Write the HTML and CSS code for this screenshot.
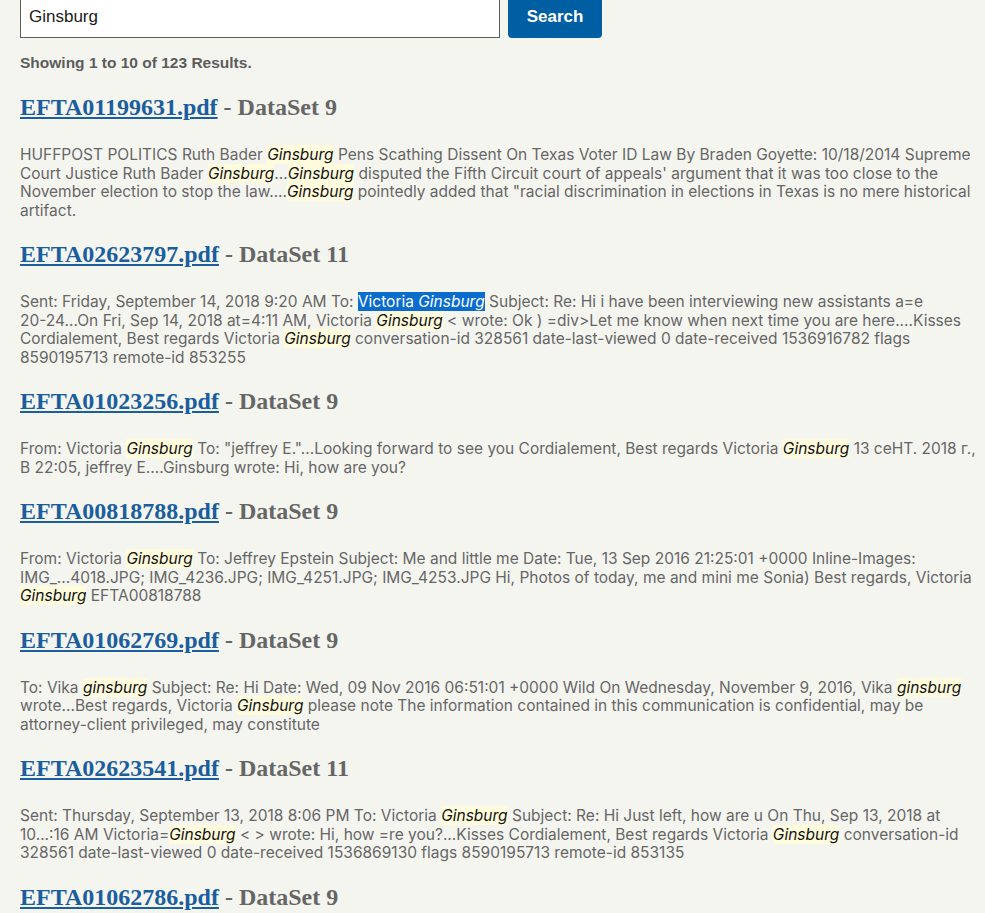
FILE: index.html
```html
<!DOCTYPE html>
<html lang="en">
<head>
  <meta charset="UTF-8" />
  <meta name="viewport" content="width=device-width, initial-scale=1.0" />
  <title>Search results - Ginsburg</title>
  <link rel="stylesheet" href="styles.css">
</head>
<body>
  <div class="page">

    <form class="search-form">
      <input class="search-input" type="text" value="Ginsburg" />
      <button class="search-button" type="button">Search</button>
    </form>

    <div class="result-count">Showing 1 to 10 of 123 Results.</div>

    <div class="result">
      <h2 class="result-title"><a href="#">EFTA01199631.pdf</a> - DataSet 9</h2>
      <p class="result-snippet">HUFFPOST POLITICS Ruth Bader <em class="hit">Ginsburg</em> Pens Scathing Dissent On Texas Voter ID Law By Braden Goyette: 10/18/2014 Supreme Court Justice Ruth Bader <em class="hit">Ginsburg</em>...<em class="hit">Ginsburg</em> disputed the Fifth Circuit court of appeals' argument that it was too close to the November election to stop the law....<em class="hit">Ginsburg</em> pointedly added that "racial discrimination in elections in Texas is no mere historical artifact.</p>
    </div>

    <div class="result">
      <h2 class="result-title"><a href="#">EFTA02623797.pdf</a> - DataSet 11</h2>
      <p class="result-snippet">Sent: Friday, September 14, 2018 9:20 AM To: <span class="selected">Victoria <em>Ginsburg</em></span> Subject: Re: Hi i have been interviewing new assistants a=e <span class="nobr">20-24</span>...On Fri, Sep 14, 2018 at=4:11 AM, Victoria <em class="hit">Ginsburg</em> &lt; wrote: Ok ) =div&gt;Let me know when next time you are here....Kisses Cordialement, Best regards Victoria <em class="hit">Ginsburg</em> conversation-id 328561 date-last-viewed 0 date-received 1536916782 flags 8590195713 remote-id 853255</p>
    </div>

    <div class="result">
      <h2 class="result-title"><a href="#">EFTA01023256.pdf</a> - DataSet 9</h2>
      <p class="result-snippet">From: Victoria <em class="hit">Ginsburg</em> To: "jeffrey E."...Looking forward to see you Cordialement, Best regards Victoria <em class="hit">Ginsburg</em> 13 ceHT. 2018 г., B 22:05, jeffrey E....Ginsburg wrote: Hi, how are you?</p>
    </div>

    <div class="result">
      <h2 class="result-title"><a href="#">EFTA00818788.pdf</a> - DataSet 9</h2>
      <p class="result-snippet">From: Victoria <em class="hit">Ginsburg</em> To: Jeffrey Epstein Subject: Me and little me Date: Tue, 13 Sep 2016 21:25:01 +0000 Inline-Images: IMG_...4018.JPG; IMG_4236.JPG; IMG_4251.JPG; IMG_4253.JPG Hi, Photos of today, me and mini me Sonia) Best regards, Victoria <em class="hit">Ginsburg</em> EFTA00818788</p>
    </div>

    <div class="result">
      <h2 class="result-title"><a href="#">EFTA01062769.pdf</a> - DataSet 9</h2>
      <p class="result-snippet">To: Vika <em class="hit">ginsburg</em> Subject: Re: Hi Date: Wed, 09 Nov 2016 06:51:01 +0000 Wild On Wednesday, November 9, 2016, Vika <em class="hit">ginsburg</em> wrote...Best regards, Victoria <em class="hit">Ginsburg</em> please note The information contained in this communication is confidential, may be <span class="nobr">attorney-client</span> privileged, may constitute</p>
    </div>

    <div class="result">
      <h2 class="result-title"><a href="#">EFTA02623541.pdf</a> - DataSet 11</h2>
      <p class="result-snippet">Sent: Thursday, September 13, 2018 8:06 PM To: Victoria <em class="hit">Ginsburg</em> Subject: Re: Hi Just left, how are u On Thu, Sep 13, 2018 at 10...:16 AM Victoria=<em class="hit">Ginsburg</em> &lt; &gt; wrote: Hi, how =re you?...Kisses Cordialement, Best regards Victoria <em class="hit">Ginsburg</em> conversation-id 328561 date-last-viewed 0 date-received 1536869130 flags 8590195713 remote-id 853135</p>
    </div>

    <div class="result">
      <h2 class="result-title"><a href="#">EFTA01062786.pdf</a> - DataSet 9</h2>
    </div>

  </div>
</body>
</html>
```

FILE: styles.css
```css
body {
  margin: 0;
  padding: 0;
  background-color: #f5f5f0;
  color: #666666;
  font-family: 'Inter', 'Liberation Sans', sans-serif;
  font-size: 15.5px;
  overflow: hidden;
}

.page {
  width: 960px;
  padding: 0 20px;
}

.search-form {
  display: flex;
  gap: 8px;
  margin-top: -4px;
}

.search-input {
  width: 480px;
  height: 42px;
  box-sizing: border-box;
  border: 1px solid #5c5c5c;
  background-color: white;
  padding: 0 8px;
  font-family: 'Liberation Sans', Arial, sans-serif;
  font-size: 17px;
  color: #1b1b1b;
}

.search-button {
  width: 94px;
  height: 42px;
  border: none;
  border-radius: 4px;
  background-color: #005ea2;
  color: white;
  font-family: 'Liberation Sans', Arial, sans-serif;
  font-size: 17px;
  font-weight: bold;
}

.result-count {
  margin-top: 15px;
  margin-bottom: 21px;
  font-family: 'Liberation Sans', Arial, sans-serif;
  font-weight: bold;
  line-height: 19px;
  color: #5c5c5c;
}

.result-title {
  margin: 20px 0 24px;
  font-family: 'Liberation Serif', 'Times New Roman', serif;
  font-size: 24px;
  line-height: 29px;
  color: #666666;
}

.result-title a {
  color: #1a5e9e;
}

.result-snippet {
  margin: 0;
  line-height: 18.5px;
}

.hit {
  background-color: #fffbdd;
  color: #111111;
}

.selected {
  background-color: #0a6ccc;
  color: white;
}

.nobr {
  white-space: nowrap;
}
```
